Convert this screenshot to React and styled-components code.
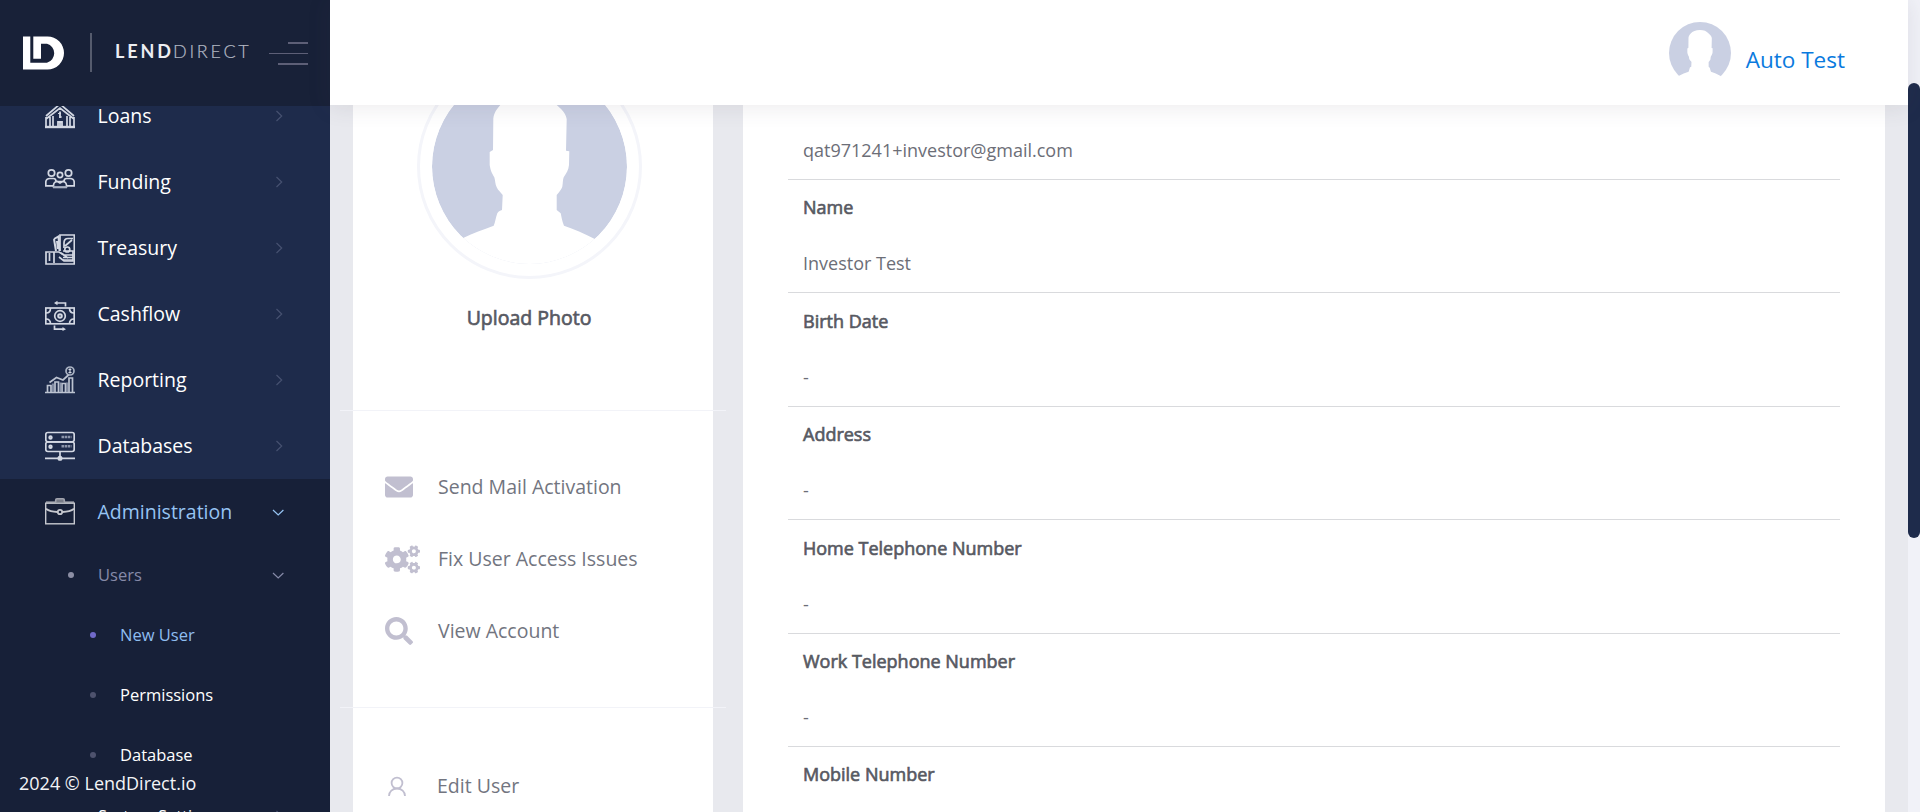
import React from 'react';
import styled, { createGlobalStyle } from 'styled-components';
import { FaEnvelope, FaCogs, FaSearch } from 'react-icons/fa';

const GlobalStyle = createGlobalStyle`
  * { box-sizing: border-box; }
  html, body { margin: 0; height: 100%; overflow: hidden; }
  body {
    font-family: "Open Sans", "Noto Sans", sans-serif;
    font-weight: 400;
    background: #e8e9ee;
  }
`;

const Page = styled.div`
  display: flex;
  width: 1920px;
  height: 812px;
  overflow: hidden;
`;

/* ---------- Sidebar ---------- */

const Sidebar = styled.aside`
  position: relative;
  display: flex;
  flex-direction: column;
  flex: none;
  width: 330px;
  height: 812px;
  overflow: hidden;
  background: #1e2b4b;
`;

const Brand = styled.div`
  display: flex;
  align-items: center;
  flex: none;
  height: 106px;
  padding: 0 22px 0 23px;
  background: #182138;
`;

const BrandMark = styled.svg`
  display: block;
  flex: none;
  width: 41px;
  height: 34px;
  margin-top: -1px;
`;

const BrandDivider = styled.span`
  width: 2px;
  height: 39px;
  margin: -1px 23px 0 26px;
  background: #555b6d;
`;

const BrandName = styled.div`
  display: flex;
  align-items: center;
  height: 30px;
  margin-top: -5px;
  font-family: Lato, "Open Sans", sans-serif;
  font-size: 18px;
  line-height: 30px;
`;

const BrandStrong = styled.span`
  width: 58px;
  font-weight: 700;
  letter-spacing: 2.9px;
  color: #eceef2;
`;

const BrandLight = styled.span`
  width: 78px;
  font-weight: 300;
  letter-spacing: 2.75px;
  color: #b4b9c5;
  -webkit-text-stroke: 0.2px #b4b9c5;
`;

const Toggler = styled.button`
  display: flex;
  flex-direction: column;
  align-items: flex-end;
  justify-content: space-between;
  width: 39px;
  height: 23px;
  margin: 0 0 0 auto;
  padding: 0;
  border: 0;
  background: none;
`;

const TogglerBar = styled.span`
  flex: none;
  width: ${(p) => p.$width}px;
  height: ${(p) => p.$height}px;
  background: #5d5f77;
`;

const Nav = styled.nav`
  flex: 1;
  min-height: 0;
  overflow: hidden;
`;

const NavList = styled.ul`
  margin: -23px 0 0;
  padding: 0;
  list-style: none;
`;

const NavLink = styled.li`
  display: flex;
  align-items: center;
  height: 66px;
  padding: 0 45px;
  font-size: 19.5px;
  color: ${(p) => (p.$active ? '#96c4f3' : '#ffffff')};
`;

const NavIcon = styled.svg`
  display: block;
  flex: none;
  width: 30px;
  height: 32px;
  margin: 2px 22.5px 0 0;
  fill: none;
  stroke: #d3d8e3;
  stroke-width: 1.7;
`;

const NavLabel = styled.span`
  flex: 1;
  line-height: 28px;
`;

const Arrow = styled.svg`
  display: block;
  flex: none;
  width: 14px;
  height: 14px;
  margin-right: ${(p) => (p.$down ? 0 : -1)}px;
  fill: none;
  stroke: ${(p) => p.$color};
  stroke-width: 1.2;
`;

const Submenu = styled.ul`
  margin: 0;
  padding: 0;
  list-style: none;
  background: #172038;
`;

const SubLink = styled.li`
  display: flex;
  align-items: center;
  height: 60px;
  margin-top: ${(p) => p.$gap || 0}px;
  padding: 0 45px 0 ${(p) => (p.$level === 2 ? 90 : 68)}px;
  font-size: ${(p) => p.$size || 16.5}px;
  color: ${(p) => p.$color};
`;

const Bullet = styled.span`
  flex: none;
  width: 6px;
  height: 6px;
  margin-right: 24px;
  border-radius: 50%;
  background: ${(p) => p.$color};
`;

const SidebarFooter = styled.div`
  position: absolute;
  left: 19px;
  top: 769px;
  font-size: 18px;
  line-height: 28px;
  color: #f3f4f7;
`;

/* ---------- Main area ---------- */

const Main = styled.div`
  display: flex;
  flex-direction: column;
  flex: 1;
  min-width: 0;
  height: 812px;
`;

const Header = styled.header`
  position: relative;
  z-index: 1;
  display: flex;
  justify-content: flex-end;
  flex: none;
  height: 105px;
  padding: 22px 63px 0 0;
  background: #ffffff;
  box-shadow: 0 1px 22px 1px rgba(69, 65, 78, 0.11);
`;

const HeaderAvatar = styled.svg`
  display: block;
  width: 62px;
  height: 62px;
`;

const UserName = styled.a`
  margin: 22px 0 0 14.5px;
  font-size: 22.5px;
  line-height: 32px;
  color: #0a7ade;
`;

const Content = styled.div`
  display: flex;
  gap: 30px;
  flex: 1;
  min-height: 0;
  padding: 0 23px;
  overflow: hidden;
  background: #e8e9ee;
`;

const ProfileCard = styled.section`
  display: flex;
  flex-direction: column;
  width: 360px;
  height: 707px;
  background: #ffffff;
`;

const Photo = styled.div`
  align-self: center;
  flex: none;
  width: 225px;
  height: 225px;
  margin: -51px 8px 0 0;
  padding: 12px;
  border: 3px solid #f4f5fa;
  border-radius: 50%;
`;

const PhotoImage = styled.svg`
  display: block;
  width: 195px;
  height: 195px;
  border-radius: 50%;
`;

const UploadLabel = styled.div`
  align-self: center;
  margin: 25px 8px 0 0;
  height: 28px;
  font-size: 19.5px;
  line-height: 28px;
  color: #575962;
  -webkit-text-stroke: 0.65px #575962;
`;

const Separator = styled.hr`
  flex: none;
  width: 386px;
  height: 1px;
  margin: ${(p) => p.$before}px -13px ${(p) => p.$after}px;
  border: 0;
  background: #f2f3f8;
`;

const ActionLink = styled.a`
  display: flex;
  align-items: center;
  flex: none;
  height: 72px;
  padding-left: 32px;
  font-size: 19.5px;
  line-height: 28px;
  color: #727580;
`;

const ActionIcon = styled.span`
  display: flex;
  flex: none;
  width: ${(p) => p.$width}px;
  padding-left: ${(p) => p.$inset || 0}px;
  color: #c1bfd0;
`;

const DetailsCard = styled.section`
  flex: 1;
  height: 707px;
  padding: 0 45px;
  overflow: hidden;
  background: #ffffff;
`;

const Field = styled.div`
  height: 113.4px;
  padding: 14.4px 15px 0;
  border-bottom: 1px solid #d9dadd;
  font-size: 18px;
  line-height: 27px;
  color: #575962;
`;

const LeadingField = styled(Field)`
  height: 75px;
  padding-top: 32px;
`;

const FieldLabel = styled.div`
  margin-bottom: 29px;
  -webkit-text-stroke: 0.65px #575962;
`;

const FieldValue = styled.div`
  color: #6c6e77;
`;

const ScrollTrack = styled.div`
  flex: none;
  width: 12px;
  height: 812px;
  padding-top: 83px;
  background: #f1f2f8;
`;

const ScrollThumb = styled.div`
  width: 12px;
  height: 455px;
  border-radius: 6px;
  background: #1e2b4b;
`;

/* ---------- Drawings ---------- */

const Silhouette = () => (
  <>
    <circle cx="97.5" cy="97.5" r="97.5" fill="#cad0e3" />
    <path
      fill="#ffffff"
      d="M97.5 25C84 25 74 29 68.3 36C63 42 61.3 46 61.3 51L61 81L57.7 83V96C58.5 102 60.5 105 62.3 108.3C63.5 112 63 115 64.7 118.3C66 121.5 69 123.5 70.7 126L70 141C67 142 66 143 65.3 144.3C63.5 149 63.5 153 61.7 156.7C51 161 41 164 31.7 168.7L20 197H175L162.3 169.7C152 164.5 142 160 132 156.7C130 152 129.5 148 128.7 144.3L124.7 141V126C128 122 129.5 120 130.3 117.7C131 114 130.7 111 131.7 108.3C134.5 104 136.5 101 137 96L137.3 82.3L134 81.7L134.7 50.3C134 44 129 40 124.7 36C118 28 110 25 97.5 25Z"
    />
  </>
);

const icons = {
  loans: (
    <>
      <path d="M1 15L15 3L29 15M1 18L15 7L29 18M1 16V26M29 16V26M5 16V26M25 16V26M8 15V26M22 15V26" />
      <path d="M0 26H30" strokeWidth="2.4" />
      <path d="M15 10.5V17M15 20V26M13 21H17V26H13Z" strokeWidth="1.8" />
      <path d="M13 12.5H16M14 16H17" strokeWidth="1" />
    </>
  ),
  funding: (
    <>
      <circle cx="6.5" cy="6" r="3.2" />
      <circle cx="23.5" cy="6" r="3.2" />
      <circle cx="15" cy="8" r="2.6" />
      <path d="M.8 18.5V15Q1 11.5 5 11.5H8.5Q11 11.7 11 14.5M29.2 18.5V15Q29 11.5 25 11.5H21.5Q19 11.7 19 14.5M0 18.8H9M21 18.8H30M8.5 20.5V18Q9 14.5 12.5 14.5H17.5Q21 14.5 21.5 18V20.5M11.5 14L15 16L18.5 14" />
      <path d="M8 20.2H22" strokeWidth="2.2" stroke="#a9b1c3" />
    </>
  ),
  treasury: (
    <>
      <path d="M15 18V2H29.3V31H1V19H9V30M9 19H14L19 22M4.5 20V28" />
      <path d="M9 6L13.5 3.5L14.5 18M9 6L11 18M12 8L13 16" strokeWidth="2" />
      <path d="M19 15V10Q19 5.5 23 5.5H28M20 13L27 7M18 18H28V28H19L14 24" />
      <circle cx="22.3" cy="16.5" r="2.5" />
      <path d="M19 22H28M18 24.5H28M18 27H28M16 20L23 25" strokeWidth="1.6" />
    </>
  ),
  cashflow: (
    <>
      <rect x=".8" y="9" width="28.4" height="15.8" />
      <circle cx="15" cy="17" r="5.3" />
      <circle cx="15" cy="17" r="1.8" strokeWidth="2" />
      <path d="M1 14Q5.5 14 5.5 9M24.5 9Q24.5 14 29 14M1 20Q5.5 20 5.5 25M24.5 25Q24.5 20 29 20M20.5 7.5V4H11M9.5 26.5V30.2H19" />
      <path d="M12.5 1.7L9 4L12.5 6.3ZM17.5 28L21 30.2L17.5 32Z" fill="#d3d8e3" stroke="none" />
    </>
  ),
  reporting: (
    <>
      <path d="M0 27.5H30M2.5 27V20.5H6V27M10 27V17H13.5V27M17 27V18.5H20.5V27M24 27V13H27.5V27" stroke="#bcc3d1" />
      <path d="M8 27V18.5M15.5 27V17.5M22 27V17.5" stroke="#8993a9" strokeWidth="1.8" />
      <path d="M4.5 17.5L11.5 12.5L18 15L24 9.5" stroke="#bcc3d1" strokeWidth="1.7" />
      <circle cx="25" cy="6" r="4" stroke="#aab3c4" />
      <path d="M25 3.3V8.5M23.5 4.5H26.3M23.5 7.5H26.5" strokeWidth="1.2" />
    </>
  ),
  databases: (
    <>
      <rect x=".8" y="1.5" width="28.4" height="9.3" rx="2" />
      <rect x=".8" y="11" width="28.4" height="9.5" rx="2" />
      <circle cx="5.5" cy="6.5" r="1.2" strokeWidth="2" />
      <circle cx="5.5" cy="15.8" r="1.2" strokeWidth="2" />
      <path d="M16.5 6H26.5M16.5 15.3H26.5" stroke="#8b94aa" strokeWidth="2.4" strokeDasharray="2.5 .6" />
      <path d="M15 20.5V25.5M0 27.4H30" />
      <circle cx="15" cy="27.2" r="1.7" fill="#d3d8e3" />
    </>
  ),
  administration: (
    <>
      <rect x=".7" y="5.2" width="28.6" height="20.6" strokeWidth="1.4" stroke="#c6c8cf" />
      <path d="M1 4.3H29" stroke="#a9acb5" strokeWidth="1.8" />
      <path d="M10.7 4.5V2Q10.7 .8 12 .8H18Q19.3 .8 19.3 2V4.5" stroke="#a1a3ad" fill="#777b87" strokeWidth="1.6" />
      <path d="M1 10.8Q5 13.8 12.5 14M29 10.8Q25 13.8 17.5 14" stroke="#c6c8cf" strokeWidth="2" />
      <circle cx="15" cy="14" r="2.2" stroke="#c6c8cf" strokeWidth="1.8" />
    </>
  ),
};

const ArrowRight = () => (
  <Arrow $color="#465170" viewBox="0 0 14 14">
    <path d="M4.5 2L9.7 7L4.5 12" />
  </Arrow>
);

const ArrowDown = ({ color }) => (
  <Arrow $down $color={color} viewBox="0 0 14 14">
    <path d="M2 5L7.2 10L12.4 5" />
  </Arrow>
);

const UserOutline = () => (
  <svg width="18" height="21" viewBox="0 0 18 21" fill="none" stroke="#c1bfd0" strokeWidth="1.8">
    <circle cx="9" cy="7" r="5.4" />
    <path d="M1 20C1 15.5 4.5 12.5 9 12.5S17 15.5 17 20" />
  </svg>
);

/* ---------- Data ---------- */

const menu = [
  ['Loans', 'loans'],
  ['Funding', 'funding'],
  ['Treasury', 'treasury'],
  ['Cashflow', 'cashflow'],
  ['Reporting', 'reporting'],
  ['Databases', 'databases'],
];

const userLinks = [
  { label: 'New User', color: '#8fbdf0', dot: '#716aca' },
  { label: 'Permissions', color: '#ffffff', dot: '#4e526d' },
  { label: 'Database', color: '#ffffff', dot: '#4e526d' },
];

const fields = [
  ['Name', 'Investor Test'],
  ['Birth Date', '-'],
  ['Address', '-'],
  ['Home Telephone Number', '-'],
  ['Work Telephone Number', '-'],
  ['Mobile Number', ''],
];

export default function App() {
  return (
    <Page>
      <GlobalStyle />
      <Sidebar>
        <Brand>
          <BrandMark viewBox="0 0 41 34">
            <path
              fill="#ffffff"
              fillRule="evenodd"
              d="M0 .5H7.3V26.7H24A9.8 9.8 0 0 0 24 7.8H18V22.7H10.3V.5H24.5A16.5 16.5 0 0 1 24.5 33.5H0Z"
            />
          </BrandMark>
          <BrandDivider />
          <BrandName>
            <BrandStrong>LEND</BrandStrong>
            <BrandLight>DIRECT</BrandLight>
          </BrandName>
          <Toggler aria-label="Toggle menu">
            <TogglerBar $width={20} $height={2} />
            <TogglerBar $width={39} $height={1} />
            <TogglerBar $width={30} $height={2} />
          </Toggler>
        </Brand>
        <Nav>
          <NavList>
            {menu.map(([label, icon]) => (
              <NavLink key={label}>
                <NavIcon viewBox="0 0 30 32">{icons[icon]}</NavIcon>
                <NavLabel>{label}</NavLabel>
                <ArrowRight />
              </NavLink>
            ))}
          </NavList>
          <Submenu>
            <NavLink $active>
              <NavIcon viewBox="0 0 30 30">{icons.administration}</NavIcon>
              <NavLabel>Administration</NavLabel>
              <ArrowDown color="#96c4f3" />
            </NavLink>
            <SubLink $color="#868aa8">
              <Bullet $color="#8c8ea4" />
              <NavLabel>Users</NavLabel>
              <ArrowDown color="#868aa8" />
            </SubLink>
            {userLinks.map((l) => (
              <SubLink key={l.label} $level={2} $color={l.color}>
                <Bullet $color={l.dot} />
                <NavLabel>{l.label}</NavLabel>
              </SubLink>
            ))}
            <SubLink $color="#ffffff" $gap={1}>
              <Bullet $color="#4e526d" />
              <NavLabel>System Settings</NavLabel>
              <ArrowRight />
            </SubLink>
          </Submenu>
        </Nav>
        <SidebarFooter>2024 © LendDirect.io</SidebarFooter>
      </Sidebar>

      <Main>
        <Header>
          <HeaderAvatar viewBox="0 0 195 195">
            <Silhouette />
          </HeaderAvatar>
          <UserName>Auto Test</UserName>
        </Header>
        <Content>
          <ProfileCard>
            <Photo>
              <PhotoImage viewBox="0 0 195 195">
                <Silhouette />
              </PhotoImage>
            </Photo>
            <UploadLabel>Upload Photo</UploadLabel>
            <Separator $before={78} $after={40} />
            <ActionLink>
              <ActionIcon $width={53}>
                <FaEnvelope size={28} />
              </ActionIcon>
              Send Mail Activation
            </ActionLink>
            <ActionLink>
              <ActionIcon $width={53}>
                <FaCogs size={35} />
              </ActionIcon>
              Fix User Access Issues
            </ActionLink>
            <ActionLink>
              <ActionIcon $width={53}>
                <FaSearch size={28} />
              </ActionIcon>
              View Account
            </ActionLink>
            <Separator $before={40} $after={42} />
            <ActionLink>
              <ActionIcon $width={52} $inset={3}>
                <UserOutline />
              </ActionIcon>
              Edit User
            </ActionLink>
          </ProfileCard>
          <DetailsCard>
            <LeadingField>
              <FieldValue>qat971241+investor@gmail.com</FieldValue>
            </LeadingField>
            {fields.map(([label, value]) => (
              <Field key={label}>
                <FieldLabel>{label}</FieldLabel>
                <FieldValue>{value}</FieldValue>
              </Field>
            ))}
          </DetailsCard>
        </Content>
      </Main>

      <ScrollTrack>
        <ScrollThumb />
      </ScrollTrack>
    </Page>
  );
}
